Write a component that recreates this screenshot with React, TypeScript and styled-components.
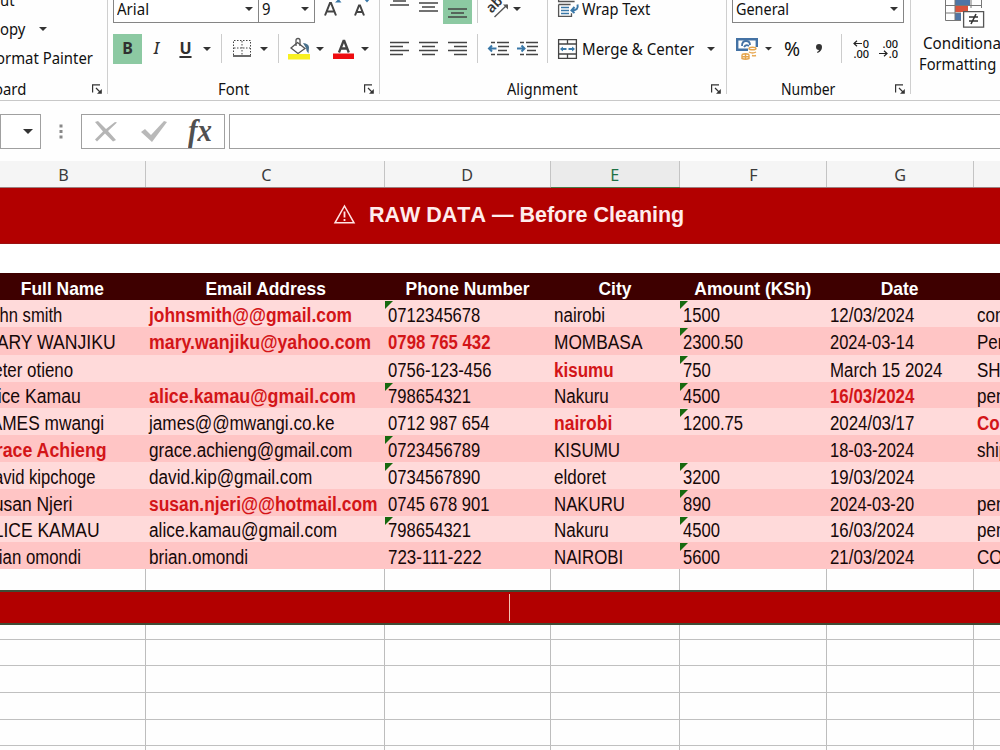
import type { ReactNode } from "react";
import styled, { createGlobalStyle } from "styled-components";

const colors = {
  title: "#b20000",
  head: "#3e0000",
  light: "#ffdada",
  dark: "#ffc5c5",
  error: "#d31518",
  green: "#8cc9a2",
  line: "#c8c8c8",
  icon: "#444444",
  blue: "#3a78a8",
};

const columns = "167px 239px 166px 129px 147px 147px 147px";

const GlobalStyle = createGlobalStyle`
  * {
    box-sizing: border-box;
  }
  body {
    margin: 0;
    background: #fff;
    overflow: hidden;
  }
`;

const Screen = styled.div`
  width: 1000px;
  height: 750px;
  overflow: hidden;
  background: #fefefe;
  font-family: "Noto Sans", "Open Sans", sans-serif;
  color: #111;
`;

const Ribbon = styled.div`
  display: flex;
  height: 101px;
  border-bottom: 1px solid ${colors.line};
  overflow: hidden;
`;

const Group = styled.div<{ $width: number; $pad?: number }>`
  display: flex;
  flex: none;
  flex-direction: column;
  width: ${(p) => p.$width}px;
  height: 94px;
  padding-left: ${(p) => p.$pad ?? 0}px;
  border-right: 1px solid #cfcfcf;
`;

const ToolRow = styled.div<{ $height: number; $raise?: number }>`
  display: flex;
  flex: none;
  align-items: center;
  height: ${(p) => p.$height}px;
  padding-bottom: ${(p) => p.$raise ?? 0}px;
`;

const GroupFooter = styled.div`
  display: flex;
  align-items: center;
  height: 20px;
  margin-top: auto;
  margin-bottom: -5px;
`;

const Gap = styled.span<{ $width: number }>`
  flex: none;
  width: ${(p) => p.$width}px;
`;

const Label = styled.span<{ $width: number; $stretch?: number; $size?: number; $cut?: number }>`
  flex: none;
  width: ${(p) => p.$width + (p.$cut ?? 0)}px;
  margin-left: ${(p) => -(p.$cut ?? 0)}px;
  font-size: ${(p) => p.$size ?? 16}px;
  line-height: 20px;
  white-space: nowrap;
  transform: scaleX(${(p) => p.$stretch ?? 0.93});
  transform-origin: left center;
`;

const Select = styled.div<{ $width: number }>`
  display: flex;
  flex: none;
  align-items: center;
  justify-content: space-between;
  width: ${(p) => p.$width}px;
  height: 31px;
  margin-top: -2px;
  padding: 2px 5px 0 3px;
  border: 1px solid #858585;
  background: #fff;

  & + & {
    border-left: 0;
  }
`;

const Toggle = styled.div<{ $active?: boolean }>`
  display: flex;
  flex: none;
  align-items: center;
  justify-content: center;
  width: 29px;
  height: 30px;
  padding-bottom: 2px;
  background: ${(p) => (p.$active ? colors.green : "transparent")};
`;

const Letter = styled.span<{ $kind: "bold" | "italic" | "underline" }>`
  color: #303030;
  font-size: 16px;
  font-style: ${(p) => (p.$kind === "italic" ? "italic" : "normal")};
  font-weight: ${(p) => (p.$kind === "italic" ? 500 : 700)};
  line-height: 20px;
  text-decoration: ${(p) => (p.$kind === "underline" ? "underline" : "none")};
  text-decoration-thickness: 1.5px;
  text-underline-offset: 2px;
`;

const Rule = styled.span<{ $height?: number }>`
  flex: none;
  width: 1px;
  height: ${(p) => p.$height ?? 29}px;
  background: #cccccc;
`;

const Icon = styled.svg`
  display: block;
  flex: none;
  overflow: visible;
`;

const Decimals = styled.span`
  display: flex;
  flex: none;
  flex-direction: column;
  gap: 1px;
  width: 18px;
  padding-bottom: 1px;
`;

const DecimalLine = styled.span`
  display: flex;
  align-items: center;
  justify-content: flex-end;
  gap: 1px;
  height: 9px;
  font-size: 11px;
  font-weight: 500;
  line-height: 9px;
`;

const StylesGroup = styled.div`
  display: flex;
  flex: none;
  flex-direction: column;
  width: 100px;
  padding-left: 8px;
`;

const FormulaBar = styled.div`
  display: flex;
  height: 60px;
  padding-top: 13px;
`;

const FormulaBox = styled.div<{ $width: number }>`
  display: flex;
  flex: none;
  align-items: center;
  width: ${(p) => p.$width}px;
  height: 35px;
  border: 1px solid #a0a0a0;
  background: #fff;
`;

const Fx = styled.span`
  width: 26px;
  padding-bottom: 2px;
  color: #505050;
  font-family: "Liberation Serif", serif;
  font-size: 31px;
  font-style: italic;
  font-weight: 700;
  line-height: 30px;
  transform: scaleX(0.93);
  transform-origin: left center;
`;

const Sheet = styled.div`
  width: 1142px;
  margin-left: -21px;
`;

const Letters = styled.div`
  display: grid;
  grid-template-columns: ${columns};
  height: 27px;
  background: #f5f5f5;
  border-bottom: 1px solid #9c8080;
`;

const ColumnLetter = styled.div<{ $selected?: boolean }>`
  display: flex;
  align-items: center;
  justify-content: center;
  padding-top: 2px;
  border-right: 1px solid #c4c4c4;
  background: ${(p) => (p.$selected ? "#ebebeb" : "transparent")};
  box-shadow: ${(p) => (p.$selected ? "0 1px 0 #4a7a4a" : "none")};
  color: ${(p) => (p.$selected ? "#1e7145" : "#3b3b3b")};
  font-size: 17px;
  line-height: 20px;

  &:nth-child(-n + 2) {
    padding-left: 3px;
  }

  span {
    transform: scaleX(0.95);
  }
`;

const TitleBar = styled.div`
  display: flex;
  align-items: center;
  height: 56px;
  padding: 0 0 2px 355px;
  border-bottom: 1px solid #9a1010;
  background: ${colors.title};
`;

const Title = styled.h1`
  margin: 0 0 0 14px;
  color: #ffecec;
  font: 700 22px/26px "Liberation Sans", Arial, sans-serif;
  font-kerning: none;
  white-space: nowrap;
  transform: scaleX(0.977);
  transform-origin: left center;
`;

const Spacer = styled.div`
  height: 29px;
  background: #fff;
`;

const HeadRow = styled.div`
  display: grid;
  grid-template-columns: ${columns};
  height: 27px;
  background: ${colors.head};
`;

const HeadCell = styled.div`
  display: flex;
  align-items: center;
  justify-content: center;
  padding-top: 4px;
  color: #fff;
  font: 700 19px/22px "Liberation Sans", Arial, sans-serif;
  white-space: nowrap;

  &:nth-child(n + 4) {
    padding-right: 2px;
  }

  span {
    transform: scaleX(0.917);
  }
`;

const DataRow = styled.div<{ $height: number; $dark: boolean }>`
  display: grid;
  grid-template-columns: ${columns};
  height: ${(p) => p.$height}px;
  background: ${(p) => (p.$dark ? colors.dark : colors.light)};
`;

const Cell = styled.div<{ $flag: boolean }>`
  position: relative;
  display: flex;
  align-items: center;
  min-width: 0;
  padding: 2px 0 0 3px;

  &::before {
    content: "";
    display: ${(p) => (p.$flag ? "block" : "none")};
    position: absolute;
    top: 1px;
    left: 0;
    border-top: 8px solid #16690f;
    border-right: 8px solid transparent;
  }
`;

const Value = styled.span<{ $error: boolean; $em: number }>`
  position: relative;
  color: ${(p) => (p.$error ? colors.error : "#160808")};
  font-family: "Liberation Sans", Arial, sans-serif;
  font-size: 20px;
  font-weight: ${(p) => (p.$error ? 700 : 400)};
  line-height: 22px;
  white-space: nowrap;
  transform: scaleX(${(p) => p.$em / 20});
  transform-origin: left center;
`;

const EmptyRow = styled.div<{ $height: number; $line?: boolean }>`
  display: grid;
  grid-template-columns: ${columns};
  height: ${(p) => p.$height}px;
  border-bottom: ${(p) => (p.$line ? "1px solid #c0c0c0" : "0")};
`;

const EmptyCell = styled.div`
  border-right: 1px solid #bdbdbd;
`;

const FooterBar = styled.div`
  display: flex;
  align-items: center;
  height: 35px;
  padding-left: 530px;
  border-top: 2px solid #3f4c36;
  border-bottom: 2px solid #3f4c36;
  background: ${colors.title};
`;

const Caret = styled.span`
  width: 1px;
  height: 27px;
  background: #f4c4b4;
`;

interface CellData {
  text: string;
  error?: boolean;
  flag?: boolean;
  em?: number;
}

const t = (text: string, em?: number): CellData => ({ text, em });
const bad = (text: string, em?: number): CellData => ({ text, em, error: true });
const flag = (text: string): CellData => ({ text, flag: true });

const headings = ["Full Name", "Email Address", "Phone Number", "City", "Amount (KSh)", "Date", ""];
const letters = ["B", "C", "D", "E", "F", "G", "H"];
// Rendered width of one em for each column's text
const columnEm = [17.2, 17.15, 16.6, 17, 16.6, 16.85, 17];

const rows: { height: number; cells: CellData[] }[] = [
  { height: 27, cells: [t("John smith", 16.6), bad("johnsmith@@gmail.com", 17.39), flag("0712345678"), t("nairobi"), flag("1500"), t("12/03/2024"), t("completed")] },
  { height: 28, cells: [t("MARY WANJIKU", 17.6), bad("mary.wanjiku@yahoo.com", 17.75), bad("0798 765 432", 16.75), t("MOMBASA", 17.3), flag("2300.50"), t("2024-03-14", 16.45), t("Pending")] },
  { height: 27, cells: [t("Peter otieno", 16.9), t(""), t("0756-123-456"), bad("kisumu"), flag("750"), t("March 15 2024"), t("SHIPPED")] },
  { height: 26, cells: [t("Alice Kamau", 17.6), bad("alice.kamau@gmail.com", 17.85), flag("798654321"), t("Nakuru"), flag("4500"), bad("16/03/2024"), t("pending")] },
  { height: 27, cells: [t("JAMES mwangi", 17.3), t("james@@mwangi.co.ke"), t("0712 987 654"), bad("nairobi", 17.5), flag("1200.75"), t("2024/03/17"), bad("Completed")] },
  { height: 27, cells: [bad("Grace Achieng", 17.75), t("grace.achieng@gmail.com"), flag("0723456789"), t("KISUMU"), t(""), t("18-03-2024", 16.45), t("shipped")] },
  { height: 27, cells: [t("David kipchoge", 16.6), t("david.kip@gmail.com"), flag("0734567890"), t("eldoret"), flag("3200"), t("19/03/2024"), t("")] },
  { height: 27, cells: [t("Susan Njeri", 17.5), bad("susan.njeri@@hotmail.com", 17.42), t("0745 678 901"), t("NAKURU", 16.8), flag("890"), t("2024-03-20", 16.45), t("pending")] },
  { height: 26, cells: [t("ALICE KAMAU", 17.5), t("alice.kamau@gmail.com", 17.25), flag("798654321"), t("Nakuru"), flag("4500"), t("16/03/2024"), t("pending")] },
  { height: 27, cells: [t("Brian omondi", 16.8), t("brian.omondi"), t("723-111-222", 16.95), t("NAIROBI", 16.8), flag("5600"), t("21/03/2024"), t("COMPLETED")] },
];

const Arrow = ({ size = 8 }: { size?: number }) => (
  <Icon width={size} height={size / 2} viewBox="0 0 8 4">
    <path d="M0 0h8L4 4z" fill="#333" />
  </Icon>
);

const Launcher = () => (
  <Icon width={10} height={10} viewBox="0 0 10 10" fill="none" stroke="#333" strokeWidth={1.2}>
    <path d="M.6 8.500V.8H8M4 4l4.500 4.500" />
    <path d="M9.800 5v4.800H5z" fill="#333" stroke="none" />
  </Icon>
);

const Lines = ({ align }: { align: "left" | "center" | "right" }) => {
  const short = align === "left" ? 0 : align === "center" ? 3 : 6;
  return (
    <Icon width={19} height={14} viewBox="0 0 19 14" stroke={colors.icon} strokeWidth={1.4}>
      <path d={`M0 .5h19M${short} 4.500h13M0 8.500h19M${short} 12.500h13`} />
    </Icon>
  );
};

const ThreeLines = ({ y }: { y: number }) => (
  <Icon width={19} height={20} viewBox="0 0 19 20" stroke={colors.icon} strokeWidth={1.4}>
    <path d={`M0 ${y}h19M3 ${y + 4}h13M0 ${y + 8}h19`} />
  </Icon>
);

const SizeLetters = () => (
  <Icon width={40} height={22} viewBox="0 0 40 22" fill="none" stroke={colors.icon} strokeWidth={2}>
    <path d="M2 17.500L7 5h1l5 12.500M4 13.500h7M32 17.500L36 7.500h1l4 10M33.500 14h6" />
    <path d="M12 4.500h6.500L15.500 1zM41 1h6l-3 3.500z" fill={colors.blue} stroke="none" />
  </Icon>
);

const Borders = () => (
  <Icon width={18} height={17} viewBox="0 0 18 17" fill="none" stroke="#444">
    <path d="M.5 15V.5h17V15M9 1v14M1 8h16" strokeDasharray="1.5 1.5" />
    <path d="M0 16h18" strokeWidth={1.6} />
  </Icon>
);

const FillColor = () => (
  <Icon width={22} height={22} viewBox="0 0 22 22" fill="none">
    <path d="M9.500 4.500L17 10.500l-7 5L3 10z" fill="#fff" stroke="#555" strokeWidth={1.3} />
    <path d="M8 8V2.500Q8 .5 10 .5t2 2V8" stroke="#555" strokeWidth={1.3} />
    <path d="M15 5q6 .5 6 4.500l-.5 6Q18 13.500 18 10z" fill="#48708c" />
    <path d="M0 16h22v5.500H0z" fill="#f8f020" />
  </Icon>
);

const FontColor = () => (
  <Icon width={21} height={20} viewBox="0 0 21 20">
    <path d="M6 13.500L10.500 2h.8l4.500 11.500M7.500 9.500h7" fill="none" stroke="#444" strokeWidth={2.3} />
    <path d="M0 14.500h21v5.500H0z" fill="#ee0c10" />
  </Icon>
);

const Indent = ({ out }: { out?: boolean }) => (
  <Icon width={21} height={14} viewBox="0 0 21 14" fill="none" stroke="#444" strokeWidth={1.4}>
    <path d="M3 .5h4M9 .5h12M10 4.500h11M10 8.500h9M3 12.500h4M9 12.500h12" />
    <path d={out ? "M.5 6.500h8M4 3.500l-3 3 3 3" : "M0 6.500h8M4.500 3.500l3 3-3 3"} stroke={colors.blue} strokeWidth={2} />
  </Icon>
);

const Orientation = () => (
  <Icon width={24} height={24} viewBox="0 0 24 24" fill="none">
    <text
      x={3}
      y={17}
      transform="rotate(-45 4 14)"
      fill="#333"
      fontFamily="Noto Sans, sans-serif"
      fontSize={14}
      fontWeight={600}
    >
      ab
    </text>
    <path d="M8.500 20L21 8" stroke="#555" strokeWidth={1.4} />
    <path d="M17 7.500h5v5z" fill="#555" />
  </Icon>
);

const WrapIcon = () => (
  <Icon width={21} height={22} viewBox="0 0 21 22" fill="none" stroke="#555" strokeWidth={1.3}>
    <path d="M.6 6.500v11.800h12.900v-3M.6 6.500h12M.6 0v3.500h16" />
    <path d="M3 9.500h8M3 12.500h8M3 15.500h8" stroke={colors.blue} strokeWidth={1.400} />
    <path d="M19.500 6.500q1.500 6-6 6M16.500 9l-3 3.500 3 2.500" stroke={colors.blue} strokeWidth={2} />
  </Icon>
);

const MergeIcon = () => (
  <Icon width={19} height={20} viewBox="0 0 19 20" fill="none" stroke="#444" strokeWidth={1.3}>
    <path d="M.6.6h17.800v18.800H.6zM.6 5h17.800M.6 15h17.800M9.500.6V5M9.500 15v4.400" />
    <path d="M3 10h5.500M10.500 10H16" stroke={colors.blue} strokeWidth={2} />
    <path d="M5 8l-2.500 2L5 12M14 8l2.500 2-2.500 2" stroke={colors.blue} strokeWidth={1} />
  </Icon>
);

const Currency = () => (
  <Icon width={22} height={22} viewBox="0 0 22 22" fill="none">
    <path d="M1.200 1.200h19.600v10.600H1.200z" fill="#fff" stroke="#4472a4" strokeWidth={2.400} />
    <path d="M6 8q0-5 4-5t4 4M8 9q2-3 5-1" stroke="#4472a4" strokeWidth={1.800} />
    <path d="M12 9h10v8H12z" fill="#fff" />
    <ellipse cx={16.500} cy={10.500} rx={3.500} ry={1.300} stroke="#e6a54c" strokeWidth={1.400} />
    <path d="M13 14q3.500 2 7 0M16 17.500q2 .8 4 0M6 16.500q3.500-1.500 7 0M6 16.500v4q3.500 1.500 7 0v-4M6 18.800h7M9.500 16v5" stroke="#e6a54c" strokeWidth={1.400} />
  </Icon>
);

const ConditionalIcon = () => (
  <Icon width={40} height={29} viewBox="0 0 40 29" fill="none">
    <path d="M10 0h15v5H10z" fill="#4f75a5" />
    <path d="M10 5.500h13V12H10z" fill="#d9533c" />
    <path d="M10 13h6v7h-6z" fill="#4f75a5" />
    <path d="M.5-2v22.500H16M.5 5.500h36M.5 13H16M10-2v22M26-2v10M36.500-2v10" stroke="#777" />
    <path d="M18.600 11.600h20v15.500h-20z" fill="#fff" stroke="#555" strokeWidth={1.300} />
    <path d="M24 17h9M24 21h9M31 14l-5 10" stroke="#333" strokeWidth={1.600} />
  </Icon>
);

const Warning = () => (
  <Icon width={21} height={19} viewBox="0 0 21 19" fill="none" stroke="#ffe4e4" strokeWidth={1.500}>
    <path d="M10.500 1L20 17.800H1z" />
    <path d="M10.500 6.500v6M10.500 14v2" strokeWidth={1.800} />
  </Icon>
);

const SmallArrow = ({ left }: { left?: boolean }) => (
  <Icon width={9} height={7} viewBox="0 0 9 7" fill="none" stroke="#222" strokeWidth={1.200}>
    <path d={left ? "M9 3.500H1M4 .8L1 3.500l3 2.700" : "M0 3.500h8M5 .8l3 2.700-3 2.700"} />
  </Icon>
);

const Footer = ({ before, children }: { before: number; children: ReactNode }) => (
  <GroupFooter>
    <Gap $width={before} />
    {children}
  </GroupFooter>
);

const RibbonBar = () => (
  <Ribbon>
    <Group $width={108}>
      <ToolRow $height={14} $raise={16}>
        <Label $width={30}>ut</Label>
      </ToolRow>
      <ToolRow $height={25}>
        <Label $width={39}>opy</Label>
        <Arrow />
      </ToolRow>
      <ToolRow $height={33}>
        <Label $width={94} $cut={4}>ormat Painter</Label>
      </ToolRow>
      <Footer before={0}>
        <Label $width={92} $cut={6}>oard</Label>
        <Launcher />
      </Footer>
    </Group>

    <Group $width={272} $pad={5}>
      <ToolRow $height={33} $raise={16}>
        <Select $width={146}>
          <Label $width={40} $stretch={0.94}>Arial</Label>
          <Arrow />
        </Select>
        <Select $width={56}>
          <Label $width={16}>9</Label>
          <Arrow />
        </Select>
        <Gap $width={8} />
        <SizeLetters />
      </ToolRow>
      <ToolRow $height={31}>
        <Toggle $active>
          <Letter $kind="bold">B</Letter>
        </Toggle>
        <Toggle>
          <Letter $kind="italic">I</Letter>
        </Toggle>
        <Toggle>
          <Letter $kind="underline">U</Letter>
        </Toggle>
        <Gap $width={3} />
        <Arrow />
        <Gap $width={10} />
        <Rule />
        <Gap $width={11} />
        <Borders />
        <Gap $width={9} />
        <Arrow />
        <Gap $width={10} />
        <Rule />
        <Gap $width={9} />
        <FillColor />
        <Gap $width={6} />
        <Arrow />
        <Gap $width={9} />
        <FontColor />
        <Gap $width={7} />
        <Arrow />
      </ToolRow>
      <Footer before={105}>
        <Label $width={146}>Font</Label>
        <Launcher />
      </Footer>
    </Group>

    <Group $width={347} $pad={5}>
      <ToolRow $height={33} $raise={16}>
        <Gap $width={5} />
        <ThreeLines y={-2} />
        <Gap $width={10} />
        <ThreeLines y={4} />
        <Gap $width={5} />
        <Toggle $active>
          <ThreeLines y={11} />
        </Toggle>
        <Gap $width={5} />
        <Rule />
        <Gap $width={8} />
        <Orientation />
        <Gap $width={3} />
        <Arrow />
        <Gap $width={26} />
        <Rule $height={51} />
        <Gap $width={10} />
        <WrapIcon />
        <Gap $width={3} />
        <Label $width={80} $stretch={0.915}>Wrap Text</Label>
      </ToolRow>
      <ToolRow $height={31}>
        <Gap $width={5} />
        <Lines align="left" />
        <Gap $width={10} />
        <Lines align="center" />
        <Gap $width={10} />
        <Lines align="right" />
        <Gap $width={10} />
        <Rule />
        <Gap $width={10} />
        <Indent out />
        <Gap $width={8} />
        <Indent />
        <Gap $width={9} />
        <Rule />
        <Gap $width={10} />
        <MergeIcon />
        <Gap $width={5} />
        <Label $width={125} $stretch={0.94}>Merge &amp; Center</Label>
        <Arrow />
      </ToolRow>
      <Footer before={122}>
        <Label $width={204} $stretch={0.91}>Alignment</Label>
        <Launcher />
      </Footer>
    </Group>

    <Group $width={184} $pad={5}>
      <ToolRow $height={33} $raise={16}>
        <Select $width={172}>
          <Label $width={60} $stretch={0.9}>General</Label>
          <Arrow />
        </Select>
      </ToolRow>
      <ToolRow $height={31}>
        <Gap $width={4} />
        <Currency />
        <Gap $width={7} />
        <Arrow size={7} />
        <Gap $width={12} />
        <Label $width={32} $size={20} $stretch={0.97}>%</Label>
        <Icon width={7} height={10} viewBox="0 0 7 10">
          <path d="M0 3a3 3 0 0 1 6 0q0 4-4.500 6L1 8q2-1 2-2Q0 6 0 3z" fill="#333" />
        </Icon>
        <Gap $width={18} />
        <Rule />
        <Gap $width={9} />
        <Decimals>
          <DecimalLine>
            <SmallArrow left />0
          </DecimalLine>
          <DecimalLine>.00</DecimalLine>
        </Decimals>
        <Gap $width={11} />
        <Decimals>
          <DecimalLine>.00</DecimalLine>
          <DecimalLine>
            <SmallArrow />.0
          </DecimalLine>
        </Decimals>
      </ToolRow>
      <Footer before={49}>
        <Label $width={114} $stretch={0.87}>Number</Label>
        <Launcher />
      </Footer>
    </Group>

    <StylesGroup>
      <ToolRow $height={33} $raise={4}>
        <Gap $width={26} />
        <ConditionalIcon />
      </ToolRow>
      <ToolRow $height={21} $raise={1}>
        <Gap $width={4} />
        <Label $width={90} $stretch={0.95}>Conditional</Label>
      </ToolRow>
      <ToolRow $height={21} $raise={1}>
        <Label $width={90} $stretch={0.92}>Formatting</Label>
      </ToolRow>
    </StylesGroup>
  </Ribbon>
);

const FormulaRow = () => (
  <FormulaBar>
    <FormulaBox $width={41}>
      <Gap $width={22} />
      <Arrow size={10} />
    </FormulaBox>
    <Gap $width={18} />
    <Icon width={4} height={35} viewBox="0 0 4 35" fill="#888">
      <path d="M.5 10.500h3v3h-3zM.5 16h3v3h-3zM.5 21.500h3v3h-3z" />
    </Icon>
    <Gap $width={18} />
    <FormulaBox $width={144}>
      <Gap $width={12} />
      <Icon width={23} height={21} viewBox="0 0 23 21" fill="#b5b5b5">
        <path d="M1 1l3-1 8 8 9-7 2 .5-9 8.500 8 9-3 1.500-8-8-8 8-2-2 8-8z" />
      </Icon>
      <Gap $width={24} />
      <Icon width={26} height={21} viewBox="0 0 26 21" fill="#b9b9b9">
        <path d="M0 11l4-3 6 6L23 0l3 1-15 20z" />
      </Icon>
      <Gap $width={21} />
      <Fx>fx</Fx>
    </FormulaBox>
    <Gap $width={4} />
    <FormulaBox $width={790} />
  </FormulaBar>
);

const Grid = ({ height, line }: { height: number; line?: boolean }) => (
  <EmptyRow $height={height} $line={line}>
    {letters.map((letter) => (
      <EmptyCell key={letter} />
    ))}
  </EmptyRow>
);

export default function App() {
  return (
    <Screen>
      <GlobalStyle />
      <RibbonBar />
      <FormulaRow />
      <Sheet>
        <Letters>
          {letters.map((letter) => (
            <ColumnLetter key={letter} $selected={letter === "E"}>
              <span>{letter}</span>
            </ColumnLetter>
          ))}
        </Letters>
        <TitleBar>
          <Warning />
          <Title>RAW DATA — Before Cleaning</Title>
        </TitleBar>
        <Spacer />
        <HeadRow>
          {headings.map((heading, i) => (
            <HeadCell key={i}>
              <span>{heading}</span>
            </HeadCell>
          ))}
        </HeadRow>
        {rows.map((row, i) => (
          <DataRow key={i} $height={row.height} $dark={i % 2 === 1}>
            {row.cells.map((cell, j) => (
              <Cell key={j} $flag={!!cell.flag}>
                <Value $error={!!cell.error} $em={cell.em ?? columnEm[j]}>
                  {cell.text}
                </Value>
              </Cell>
            ))}
          </DataRow>
        ))}
        <Grid height={21} />
        <FooterBar>
          <Caret />
        </FooterBar>
        <Grid height={15} line />
        <Grid height={26} line />
        <Grid height={27} line />
        <Grid height={27} line />
        <Grid height={26} line />
        <Grid height={27} />
      </Sheet>
    </Screen>
  );
}
